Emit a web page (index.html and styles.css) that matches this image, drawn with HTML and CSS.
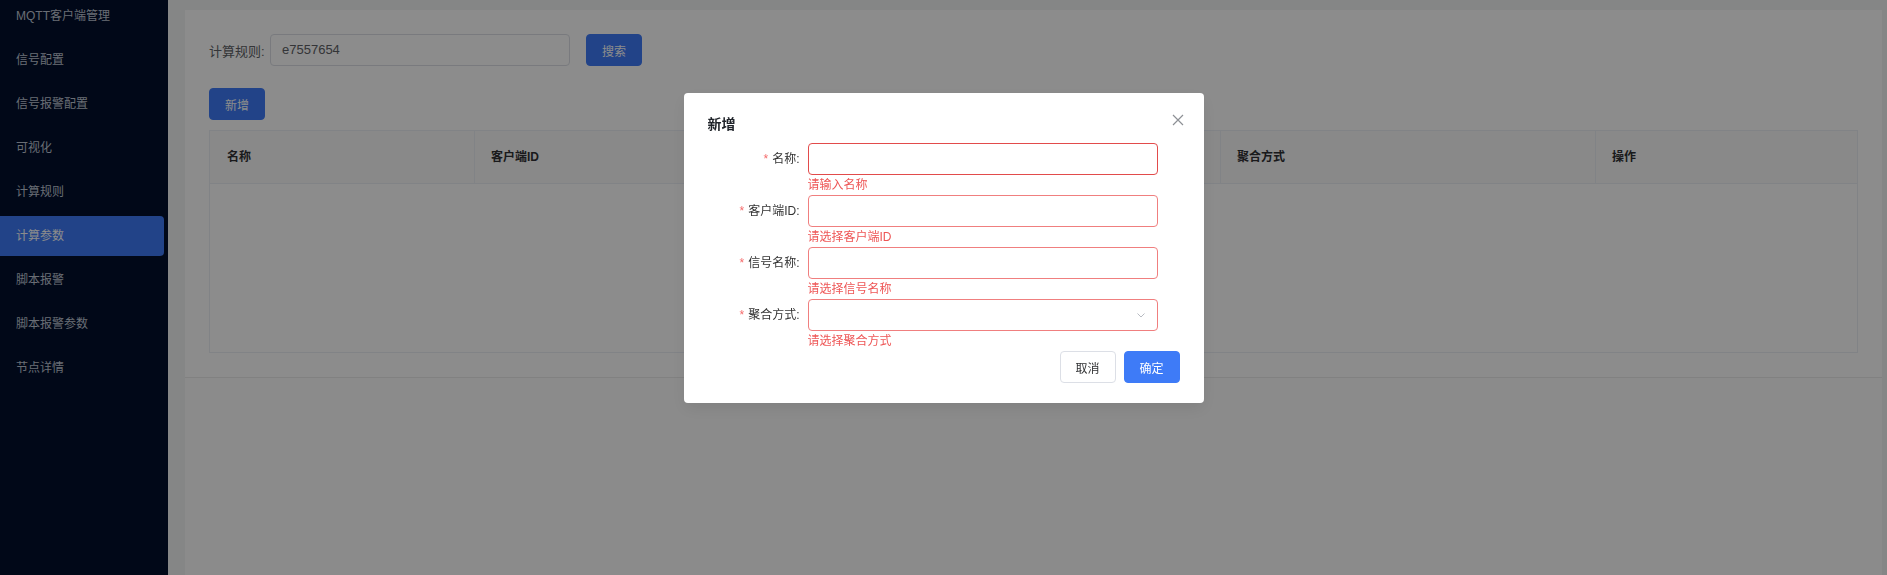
FILE: index.html
```html
<!DOCTYPE html>
<html lang="zh-CN">
<head>
<meta charset="utf-8">
<title>计算参数</title>
<link rel="stylesheet" href="styles.css">
</head>
<body>
<div class="layout">
  <aside class="sidebar">
    <ul class="menu">
      <li class="menu-item">MQTT客户端管理</li>
      <li class="menu-item">信号配置</li>
      <li class="menu-item">信号报警配置</li>
      <li class="menu-item">可视化</li>
      <li class="menu-item">计算规则</li>
      <li class="menu-item active">计算参数</li>
      <li class="menu-item">脚本报警</li>
      <li class="menu-item">脚本报警参数</li>
      <li class="menu-item">节点详情</li>
    </ul>
  </aside>
  <main class="main">
    <div class="content">
      <section class="card">
        <div class="search-row">
          <label class="search-label">计算规则:</label>
          <div class="search-input">e7557654</div>
          <button class="btn btn-primary search-btn">搜索</button>
        </div>
        <div class="toolbar">
          <button class="btn btn-primary">新增</button>
        </div>
        <div class="table">
          <div class="thead">
            <div class="th">名称</div>
            <div class="th">客户端ID</div>
            <div class="th">信号名称</div>
            <div class="th">聚合方式</div>
            <div class="th">操作</div>
          </div>
          <div class="tbody"><span class="empty">暂无数据</span></div>
        </div>
      </section>
    </div>
  </main>
</div>

<div class="overlay">
  <div class="dialog">
    <div class="dialog-title">新增</div>
    <button class="dialog-close" aria-label="关闭">
      <svg viewBox="0 0 12 12" width="12" height="12"><path d="M1 1L11 11M11 1L1 11" stroke="#8d9095" stroke-width="1.2" fill="none"/></svg>
    </button>
    <div class="form">
      <div class="form-row">
        <label class="form-label"><span class="req">*</span>名称:</label>
        <div class="field">
          <div class="input input-focus"></div>
          <div class="error">请输入名称</div>
        </div>
      </div>
      <div class="form-row">
        <label class="form-label"><span class="req">*</span>客户端ID:</label>
        <div class="field">
          <div class="input"></div>
          <div class="error">请选择客户端ID</div>
        </div>
      </div>
      <div class="form-row">
        <label class="form-label"><span class="req">*</span>信号名称:</label>
        <div class="field">
          <div class="input"></div>
          <div class="error">请选择信号名称</div>
        </div>
      </div>
      <div class="form-row">
        <label class="form-label"><span class="req">*</span>聚合方式:</label>
        <div class="field">
          <div class="input select">
            <svg class="arrow" viewBox="0 0 10 10" width="10" height="10"><path d="M1.5 3.5L5 7L8.5 3.5" stroke="#b8bbc2" stroke-width="1" fill="none"/></svg>
          </div>
          <div class="error">请选择聚合方式</div>
        </div>
      </div>
    </div>
    <div class="dialog-footer">
      <button class="btn btn-default">取消</button>
      <button class="btn btn-primary">确定</button>
    </div>
  </div>
</div>
</body>
</html>
```

FILE: styles.css
```css
html, body {
  margin: 0;
  height: 100%;
}

body {
  font-family: "Liberation Sans", "Noto Sans CJK SC", sans-serif;
  font-size: 12px;
  overflow: hidden;
  color: #303133;
}

.layout {
  display: flex;
  height: 100vh;
}

.sidebar {
  width: 168px;
  flex: none;
  background: #030f2c;
  overflow: hidden;
}

.menu {
  list-style: none;
  margin: -4px 0 0;
  padding: 0;
}

.menu-item {
  width: 164px;
  height: 40px;
  line-height: 40px;
  margin-bottom: 4px;
  padding-left: 16px;
  box-sizing: border-box;
  color: #bfc6d4;
  font-size: 12px;
  border-radius: 0 4px 4px 0;
  white-space: nowrap;
}

.menu-item.active {
  background: #3e7bf7;
  color: #ffffff;
}

.main {
  flex: 1;
  display: flex;
  background: #f3f4f5;
  padding: 10px 5px 0 17px;
  box-sizing: border-box;
}

.content {
  flex: 1;
  background: #fdfdfd;
}

.card {
  background: #ffffff;
  padding: 24px;
  border-bottom: 1px solid #ebebeb;
}

.search-row {
  display: flex;
  align-items: center;
  height: 32px;
}

.search-label {
  width: 61px;
  font-size: 13px;
  color: #606266;
  white-space: nowrap;
}

.search-input {
  width: 300px;
  height: 32px;
  box-sizing: border-box;
  border: 1px solid #dcdfe6;
  border-radius: 4px;
  padding: 0 11px;
  line-height: 30px;
  font-size: 13px;
  color: #606266;
}

.search-btn {
  margin-left: 16px;
}

.btn {
  width: 56px;
  height: 32px;
  box-sizing: border-box;
  border-radius: 4px;
  border: 1px solid #dcdfe6;
  font-family: inherit;
  font-size: 12px;
  padding: 0;
  cursor: pointer;
}

.btn-primary {
  background: #3e7bf7;
  border-color: #3e7bf7;
  color: #ffffff;
}

.btn-default {
  background: #ffffff;
  color: #303133;
}

.toolbar {
  margin-top: 22px;
  height: 32px;
  display: flex;
}

.table {
  margin-top: 10px;
  border: 1px solid #ebeef5;
}

.thead {
  display: grid;
  grid-template-columns: 264px 373px 373px 375px 1fr;
  height: 52px;
  background: #fafafa;
  border-bottom: 1px solid #ebeef5;
}

.th {
  padding-left: 16px;
  line-height: 52px;
  font-weight: bold;
  font-size: 12px;
  color: #303133;
  border-left: 1px solid #ebeef5;
}

.th:first-child {
  border-left: none;
  padding-left: 17px;
}

.tbody {
  height: 168px;
  display: flex;
  align-items: center;
  justify-content: center;
}

.empty {
  color: #909399;
}

.overlay {
  position: fixed;
  inset: 0;
  background: rgba(0, 0, 0, 0.45);
  display: flex;
  justify-content: center;
  align-items: flex-start;
  padding-top: 93px;
}

.dialog {
  position: relative;
  width: 520px;
  box-sizing: border-box;
  background: #ffffff;
  border-radius: 4px;
  padding: 20px 24px;
  box-shadow: 0 6px 16px rgba(0, 0, 0, 0.08);
}

.dialog-title {
  height: 22px;
  line-height: 22px;
  font-size: 14px;
  font-weight: bold;
  color: #1f2329;
}

.dialog-close {
  position: absolute;
  top: 21px;
  right: 20px;
  width: 12px;
  height: 12px;
  padding: 0;
  border: none;
  background: transparent;
  display: flex;
}

.form {
  margin-top: 8px;
}

.form-row {
  display: flex;
}

.form-label {
  width: 100px;
  flex: none;
  box-sizing: border-box;
  padding-right: 8px;
  height: 32px;
  line-height: 32px;
  text-align: right;
  font-size: 12px;
  color: #333333;
}

.req {
  color: #f56c6c;
  margin-right: 4px;
}

.field {
  width: 350px;
}

.input {
  position: relative;
  height: 32px;
  box-sizing: border-box;
  border: 1px solid #f07f7f;
  border-radius: 4px;
}

.input-focus {
  border-color: #e24b4b;
}

.arrow {
  position: absolute;
  right: 11px;
  top: 10px;
}

.error {
  height: 20px;
  line-height: 20px;
  font-size: 12px;
  color: #ee5656;
}

.dialog-footer {
  display: flex;
  justify-content: flex-end;
  gap: 8px;
}
```
